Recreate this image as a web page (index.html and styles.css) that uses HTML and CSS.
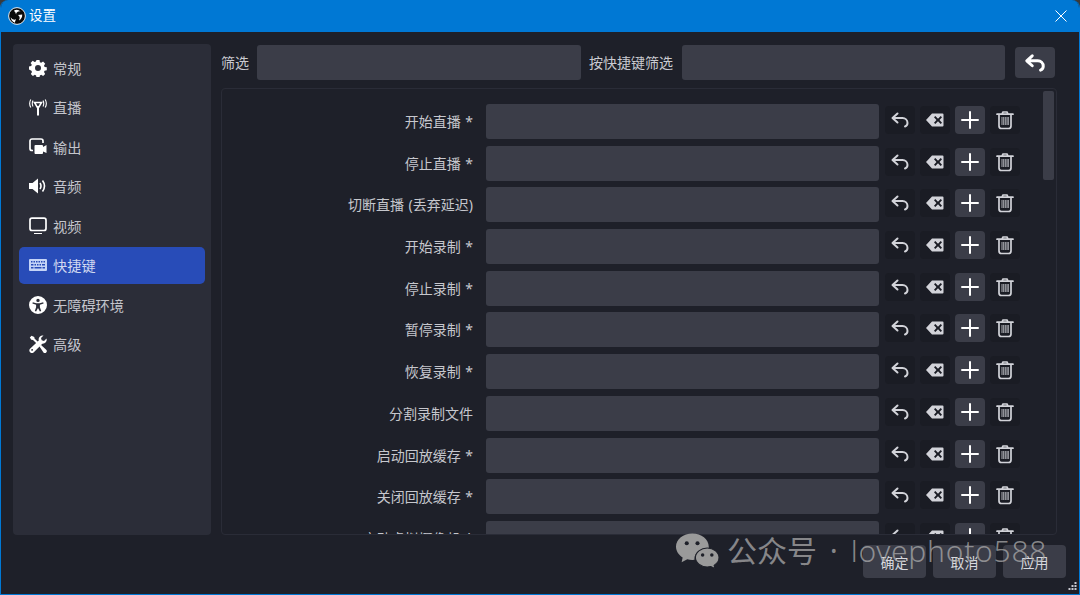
FILE: index.html
```html
<!DOCTYPE html>
<html lang="zh">
<head>
<meta charset="utf-8">
<title>设置</title>
<link rel="stylesheet" href="styles.css">
</head>
<body>
<svg class="defs" width="0" height="0">
  <symbol id="undo" viewBox="0 0 20 20"><path d="M7.500 3.500 2.500 8l5 4.500M3 8h9.500a5 5 0 0 1 5 5c0 1.800-1 3-2.500 3.500" fill="none" stroke="currentColor" stroke-linecap="round" stroke-linejoin="round"/></symbol>
  <symbol id="clear" viewBox="0 0 20 20"><path fill-rule="evenodd" d="M7 3.500h10.500a1 1 0 0 1 1 1v11a1 1 0 0 1-1 1H7L1 10ZM9 7.200l2.500 2.800L9 12.800l1.300 1.200 2.700-2.700 2.700 2.700 1.300-1.200-2.500-2.800 2.500-2.800L15.700 6 13 8.700 10.300 6Z" fill="currentColor"/></symbol>
  <symbol id="plus" viewBox="0 0 20 20"><path d="M10 2v16M2 10h16" stroke="currentColor" stroke-width="2" stroke-linecap="round"/></symbol>
  <symbol id="trash" viewBox="0 0 20 20"><path d="M2 4.200h16M7 3.800 8 2h4l1 1.800M4 4.500V16a2.500 2.500 0 0 0 2.500 2.500h7A2.500 2.500 0 0 0 16 16V4.500" fill="none" stroke="currentColor" stroke-width="1.700" stroke-linecap="round"/><path d="M7 7v8M8.700 7v8M10.300 7v8M12 7v8M13.300 7v8" stroke="currentColor" stroke-width=".8"/></symbol>
</svg>
<div class="window">
  <header class="titlebar">
    <svg class="logo" viewBox="0 0 20 20"><circle cx="10" cy="10" r="9.300" fill="#0a0a0a" stroke="#fff" stroke-width="1"/><path d="M6.500 4.200Q10.500 1.800 14 5q-2.800-1-4.500 1.500-.5.800-.5 2Q8.500 5.500 6.500 4.200ZM15.800 8.300q.2 4.600-3.700 6.700 1.900-2.300.3-4.900-.6-.8-1.600-1.300 2.900-.1 5-.5ZM7.700 17.500q-4.400-1.900-4.700-6.200 1 2.700 4 2.800 1-.1 2-.6-1.400 2.400-1.300 4Z" fill="#fff"/></svg>
    <span class="title">设置</span>
    <svg class="close" viewBox="0 0 12 12"><path d="M.5.500l11 11M11.500.500l-11 11" stroke="#fff" stroke-width="1"/></svg>
  </header>
  <div class="content">
    <div class="main">
      <nav class="sidebar">
        <div class="nav-item"><svg class="nav-icon" viewBox="0 0 18 18"><path fill="#fff" fill-rule="evenodd" d="M7.500 1h3l.4 2.200 1.300.6 1.900-1.200 2.100 2.100-1.200 1.900.6 1.300 2.200.4v3l-2.200.4-.6 1.300 1.200 1.900-2.100 2.100-1.900-1.200-1.300.6-.4 2.200h-3l-.4-2.200-1.300-.6-1.900 1.200-2.100-2.100 1.200-1.900-.6-1.300L0 10.500v-3l2.200-.4.600-1.300-1.200-1.900 2.100-2.100 1.900 1.200 1.300-.6ZM9 6a3 3 0 1 0 0 6 3 3 0 0 0 0-6Z"/></svg><span>常规</span></div>
        <div class="nav-item"><svg class="nav-icon" viewBox="0 0 18 18"><path d="M9 8v9.500" stroke="#fff" stroke-width="2" fill="none"/><path d="M5.500 4.500h7L9 10.500Z" fill="none" stroke="#fff" stroke-width="1.600"/><path d="M1.800 1.500Q-.5 5.500 1.800 9.500M16.200 1.500q2.300 4 0 8M4 2.500q-1.500 3 0 6M14 2.500q1.500 3 0 6" fill="none" stroke="#fff" stroke-width="1.100"/></svg><span>直播</span></div>
        <div class="nav-item"><svg class="nav-icon" viewBox="0 0 18 18"><path d="M4 12.500H3A2 2 0 0 1 1 10.500V3a2 2 0 0 1 2-2h9a2 2 0 0 1 2 2v2" fill="none" stroke="#fff" stroke-width="1.700"/><path fill="#fff" d="M6.500 7H13a1 1 0 0 1 1 1v1l3.500-2v8L14 13.500V15a1 1 0 0 1-1 1H6.500a1 1 0 0 1-1-1V8a1 1 0 0 1 1-1Z"/></svg><span>输出</span></div>
        <div class="nav-item"><svg class="nav-icon" viewBox="0 0 18 18"><path fill="#fff" d="M0 6h3.500L9 1.500v15L3.500 12H0Z"/><path d="M11 6q2 3 0 6M13.500 3.500q4 5.500 0 11" fill="none" stroke="#fff" stroke-width="1.600"/></svg><span>音频</span></div>
        <div class="nav-item"><svg class="nav-icon" viewBox="0 0 18 18"><rect x="1" y="1.200" width="16" height="12.300" rx="2" fill="none" stroke="#fff" stroke-width="1.700"/><path d="M5 16.500h8" stroke="#fff" stroke-width="1.200"/></svg><span>视频</span></div>
        <div class="nav-item nav-active"><svg class="nav-icon" viewBox="0 0 18 18"><path fill="#c4d4f7" fill-rule="evenodd" d="M1 3h16a1 1 0 0 1 1 1v10a1 1 0 0 1-1 1H1a1 1 0 0 1-1-1V4a1 1 0 0 1 1-1Zm1 2v1.500h1.500V5Zm2.500 0v1.500H6V5ZM7 5v1.500h1.500V5Zm2.500 0v1.500H11V5ZM12 5v1.500h1.500V5Zm2.500 0v1.500H16V5ZM2 8v1.500h2.500V8Zm3.500 0v1.500H7V8ZM8 8v1.500h1.500V8Zm2.500 0v1.500H12V8ZM13 8v1.500h3V8ZM2 11v1.500h2.500V11Zm3.500 0v1.500h7V11Zm8 0v1.500H16V11Z"/></svg><span>快捷键</span></div>
        <div class="nav-item"><svg class="nav-icon" viewBox="0 0 18 18"><path fill="#fff" fill-rule="evenodd" d="M9 0a9 9 0 1 1 0 18A9 9 0 0 1 9 0Zm0 2.700a1.700 1.700 0 1 0 0 3.400 1.700 1.700 0 0 0 0-3.400ZM3.800 6.300 3.400 7.600l3.700 1.100v2.500L5.800 15l1.300.4L9 12l1.900 3.400 1.300-.4-1.300-3.800V8.700l3.700-1.100-.4-1.300-3.500.9H7.300Z"/></svg><span>无障碍环境</span></div>
        <div class="nav-item"><svg class="nav-icon" viewBox="0 0 18 18"><path d="M2.500 .8 .8 2.500l1.500 2.200 1.700.2 3.600 3.600 1.500-1.500-3.600-3.600L5.300 2Z" fill="#fff"/><path d="m10.300 11.300 1.500-1.500 5.400 4.900a1.900 1.900 0 0 1-2.700 2.700Z" fill="#fff"/><path d="M17.500 3.500 15 6l-2.300-.7L12 3l2.500-2.500A4 4 0 0 0 9.800 5.500L1 13.800A2.600 2.600 0 0 0 4.600 17.500l8.700-8.800A4 4 0 0 0 17.500 3.500ZM3.200 15.800a.9.900 0 1 1-.1-1.800.9.900 0 0 1 .1 1.800Z" fill="#fff" fill-rule="evenodd"/></svg><span>高级</span></div>
      </nav>
      <section class="right">
        <div class="filters">
          <label class="filter-label">筛选</label>
          <div class="input filter-input"></div>
          <label class="filter-label">按快捷键筛选</label>
          <div class="input filter-input"></div>
          <button class="big-undo"><svg viewBox="0 0 20 20"><use href="#undo"/></svg></button>
        </div>
        <div class="panel">
          <div class="thumb"></div>
          <div class="rows">
            <div class="row"><label>开始直播 *</label><div class="input key"></div><div class="acts"><span class="act"><svg><use href="#undo"/></svg></span><span class="act"><svg><use href="#clear"/></svg></span><span class="act act-add"><svg><use href="#plus"/></svg></span><span class="act"><svg><use href="#trash"/></svg></span></div></div>
            <div class="row"><label>停止直播 *</label><div class="input key"></div><div class="acts"><span class="act"><svg><use href="#undo"/></svg></span><span class="act"><svg><use href="#clear"/></svg></span><span class="act act-add"><svg><use href="#plus"/></svg></span><span class="act"><svg><use href="#trash"/></svg></span></div></div>
            <div class="row"><label>切断直播 (丢弃延迟)</label><div class="input key"></div><div class="acts"><span class="act"><svg><use href="#undo"/></svg></span><span class="act"><svg><use href="#clear"/></svg></span><span class="act act-add"><svg><use href="#plus"/></svg></span><span class="act"><svg><use href="#trash"/></svg></span></div></div>
            <div class="row"><label>开始录制 *</label><div class="input key"></div><div class="acts"><span class="act"><svg><use href="#undo"/></svg></span><span class="act"><svg><use href="#clear"/></svg></span><span class="act act-add"><svg><use href="#plus"/></svg></span><span class="act"><svg><use href="#trash"/></svg></span></div></div>
            <div class="row"><label>停止录制 *</label><div class="input key"></div><div class="acts"><span class="act"><svg><use href="#undo"/></svg></span><span class="act"><svg><use href="#clear"/></svg></span><span class="act act-add"><svg><use href="#plus"/></svg></span><span class="act"><svg><use href="#trash"/></svg></span></div></div>
            <div class="row"><label>暂停录制 *</label><div class="input key"></div><div class="acts"><span class="act"><svg><use href="#undo"/></svg></span><span class="act"><svg><use href="#clear"/></svg></span><span class="act act-add"><svg><use href="#plus"/></svg></span><span class="act"><svg><use href="#trash"/></svg></span></div></div>
            <div class="row"><label>恢复录制 *</label><div class="input key"></div><div class="acts"><span class="act"><svg><use href="#undo"/></svg></span><span class="act"><svg><use href="#clear"/></svg></span><span class="act act-add"><svg><use href="#plus"/></svg></span><span class="act"><svg><use href="#trash"/></svg></span></div></div>
            <div class="row"><label>分割录制文件</label><div class="input key"></div><div class="acts"><span class="act"><svg><use href="#undo"/></svg></span><span class="act"><svg><use href="#clear"/></svg></span><span class="act act-add"><svg><use href="#plus"/></svg></span><span class="act"><svg><use href="#trash"/></svg></span></div></div>
            <div class="row"><label>启动回放缓存 *</label><div class="input key"></div><div class="acts"><span class="act"><svg><use href="#undo"/></svg></span><span class="act"><svg><use href="#clear"/></svg></span><span class="act act-add"><svg><use href="#plus"/></svg></span><span class="act"><svg><use href="#trash"/></svg></span></div></div>
            <div class="row"><label>关闭回放缓存 *</label><div class="input key"></div><div class="acts"><span class="act"><svg><use href="#undo"/></svg></span><span class="act"><svg><use href="#clear"/></svg></span><span class="act act-add"><svg><use href="#plus"/></svg></span><span class="act"><svg><use href="#trash"/></svg></span></div></div>
            <div class="row"><label>启动虚拟摄像机 *</label><div class="input key"></div><div class="acts"><span class="act"><svg><use href="#undo"/></svg></span><span class="act"><svg><use href="#clear"/></svg></span><span class="act act-add"><svg><use href="#plus"/></svg></span><span class="act"><svg><use href="#trash"/></svg></span></div></div>
          </div>
        </div>
      </section>
    </div>
    <footer class="footer">
      <button class="foot-btn">确定</button>
      <button class="foot-btn">取消</button>
      <button class="foot-btn">应用</button>
    </footer>
  </div>
  <svg class="grip" viewBox="0 0 10 10"><path fill="#c8c8d0" d="M7.500 0h2v2h-2ZM4.500 3h2v2h-2ZM7.500 3h2v2h-2ZM1.500 6h2v2h-2ZM4.500 6h2v2h-2ZM7.500 6h2v2h-2Z"/></svg>
  <div class="watermark">
    <svg class="wechat" viewBox="0 0 42 34"><path fill="#9a9a9a" d="M16 0c8.800 0 16 5.700 16 12.700 0 .6 0 1.200-.1 1.700-6.800-.6-13.900 3.800-13.900 10.100 0 .4 0 .8.100 1.100L16 25.800c-1.800 0-3.500-.2-5-.7L5.500 28l1-4.700C2.500 21 0 17.100 0 12.700 0 5.700 7.200 0 16 0Z"/><path fill="#9a9a9a" d="M30.500 14c6.300 0 11.500 4.200 11.500 9.400 0 3.100-1.900 5.900-4.800 7.600l.8 3-4-1.900c-1.100.3-2.300.5-3.500.5-6.300 0-11.500-4.200-11.500-9.200S24.200 14 30.500 14Z" stroke="#1e2029" stroke-width="1"/><circle cx="10.500" cy="9.500" r="2" fill="#1e2029"/><circle cx="21" cy="9.500" r="2" fill="#1e2029"/><circle cx="26" cy="21" r="1.700" fill="#1e2029"/><circle cx="35" cy="21" r="1.700" fill="#1e2029"/></svg>
    <span class="wm-text">公众号 · <span class="wm-latin">lovephoto588</span></span>
  </div>
</div>
</body>
</html>
```
FILE: styles.css
```css
* { box-sizing: border-box; }
html, body { margin: 0; padding: 0; background: #3a3a3a; }
body { width: 1080px; height: 595px; overflow: hidden; font-family: "Noto Sans", "Noto Sans CJK SC", sans-serif; font-size: 14px; color: #c9cad0; }
.defs { position: absolute; }
.window { position: relative; width: 1080px; height: 595px; display: flex; flex-direction: column; background: #1e2029; border: 1px solid #0078d4; border-top: 0; border-radius: 8px 8px 0 0; overflow: hidden; }
.titlebar { flex: 0 0 32px; background: #0078d4; display: flex; align-items: center; padding: 0 12px 0 7px; color: #fff; }
.logo { width: 18px; height: 18px; margin-right: 3px; }
.title { font-size: 13.500px; line-height: 1; }
.close { width: 12px; height: 12px; margin-left: auto; }
.content { flex: 1; display: flex; flex-direction: column; padding: 12px 12px 16px 12px; min-height: 0; }
.main { display: flex; gap: 10px; height: 491px; }
.sidebar { width: 198px; background: #2b2d38; border-radius: 4px; padding: 5px 6px; display: flex; flex-direction: column; gap: 2.500px; }
.nav-item { height: 37px; flex: none; display: flex; align-items: center; gap: 6px; padding-left: 10px; border-radius: 5px; font-size: 14.200px; color: #c4c5cc; }
.nav-icon { width: 18px; height: 18px; flex: none; }
.nav-active { background: #284cb8; color: #d0d8f0; }
.right { width: 836px; flex: none; display: flex; flex-direction: column; gap: 8px; }
.filters { height: 36px; display: flex; align-items: center; padding-top: 1px; }
.filter-label { flex: none; margin-right: 8px; color: #c9cad0; line-height: 1; }
.input { background: #3b3d48; border-radius: 3px; }
.filter-input { width: 324px; height: 35px; margin-right: 8px; }
.filter-input + .filter-label { margin-right: 9px; }
.filter-input + .filter-label + .filter-input { width: 323px; margin-right: 10px; }
.big-undo { width: 40px; height: 31px; border: 0; padding: 0; background: #3b3d48; border-radius: 4px; color: #fff; stroke-width: 2.700; display: flex; align-items: center; justify-content: center; }
.big-undo svg { width: 24px; height: 22px; }
.panel { position: relative; height: 447px; border: 1px solid #2a2c37; border-radius: 4px; overflow: hidden; }
.thumb { position: absolute; top: 2px; right: 2px; width: 11px; height: 89px; background: #3b3d48; border-radius: 2px; }
.rows { display: flex; flex-direction: column; gap: 6.700px; padding-top: 15px; }
.row { flex: none; height: 35px; display: flex; align-items: center; }
.row label { width: 251px; text-align: right; margin-right: 13px; padding-top: 1px; flex: none; color: #c6c7cd; line-height: 1; word-spacing: 1px; }
.key { width: 393px; height: 35px; flex: none; }
.acts { display: flex; gap: 5px; margin-left: 6px; margin-top: -3px; }
.act { width: 30px; height: 28px; border-radius: 4px; background: #1a1c24; color: #d2d3d9; stroke-width: 2; display: flex; align-items: center; justify-content: center; }
.act svg { width: 20px; height: 20px; }
.act-add { background: #3b3d48; color: #fff; }
.footer { height: 33px; margin-top: 10px; display: flex; justify-content: flex-end; gap: 7px; padding-right: 1px; }
.foot-btn { width: 63px; height: 33px; border: 0; border-radius: 4px; background: #3b3d48; color: #d8d9de; font: inherit; font-size: 14px; padding: 0; }
.grip { position: absolute; right: 2px; bottom: 2px; width: 10px; height: 10px; }
.watermark { position: absolute; left: 675px; top: 531px; display: flex; align-items: center; gap: 8px; color: rgba(175, 175, 175, .72); pointer-events: none; }
.wechat { width: 43px; height: 36px; flex: none; }
.wm-text { font-size: 30px; line-height: 40px; white-space: nowrap; word-spacing: 5px; }
.wm-latin { font-weight: 300; letter-spacing: .75px; }
```
